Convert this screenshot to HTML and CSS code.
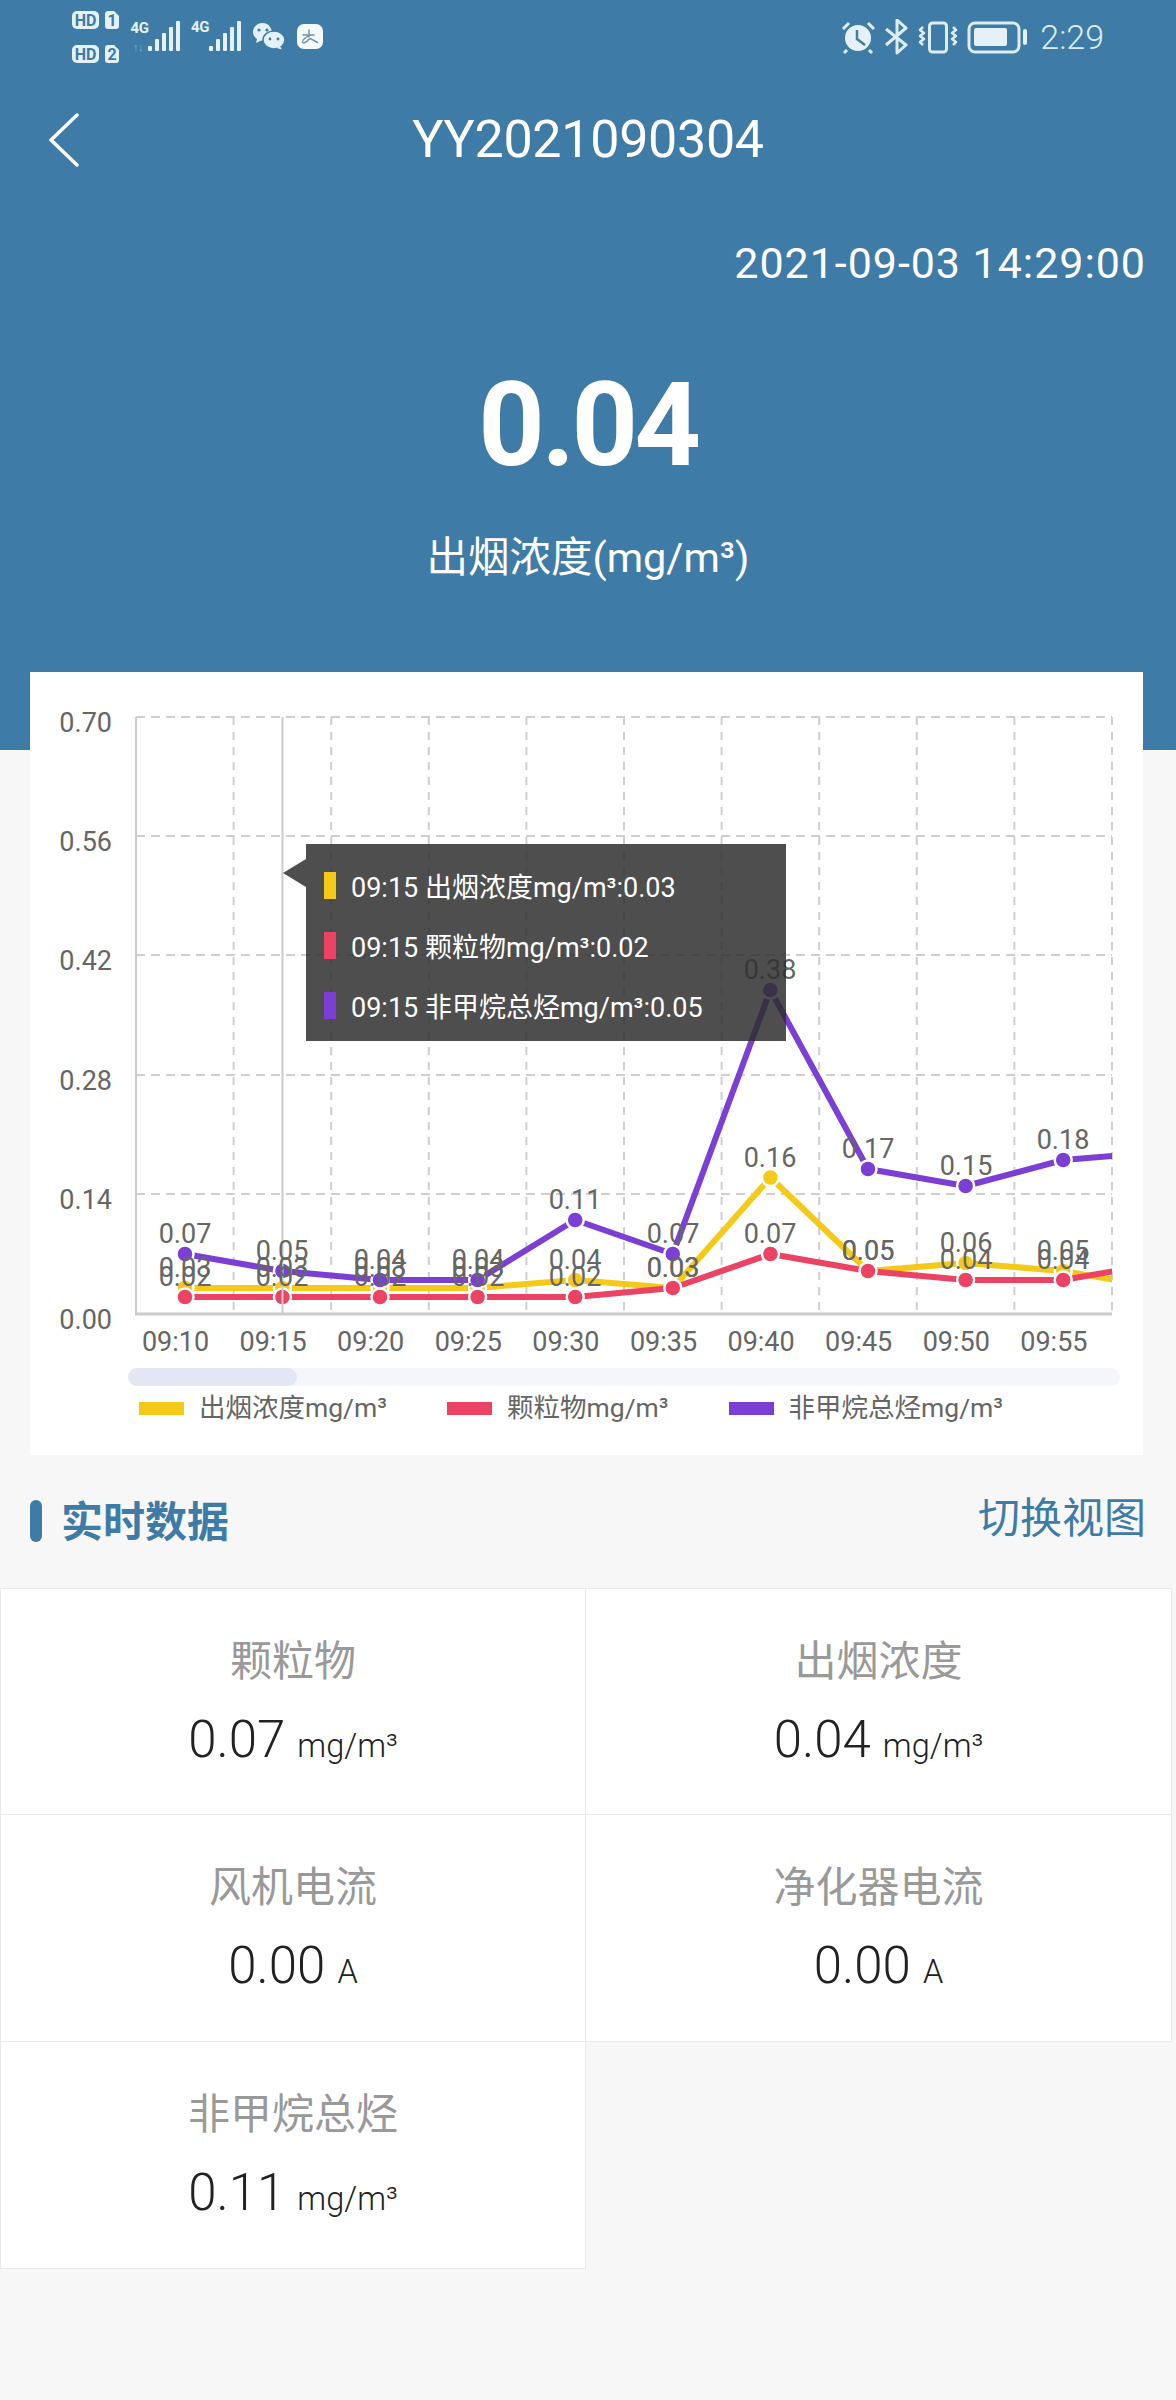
FILE: index.html
```html
<!DOCTYPE html>
<html lang="zh-CN">
<head>
<meta charset="utf-8">
<title>YY2021090304</title>
<link rel="stylesheet" href="styles.css">
</head>
<body>
<header class="hero">
  <div class="status">
    <svg class="status-left" width="260" height="58" viewBox="70 8 260 58">
      <rect class="sb-fill" x="72" y="11" width="27" height="18" rx="5"/>
      <text class="sb-hd" x="85.500" y="26">HD</text>
      <path class="sb-fill" d="M108 11h6l5 5v10a3 3 0 0 1-3 3h-8a3 3 0 0 1-3-3V14a3 3 0 0 1 3-3z"/>
      <text class="sb-hd" x="112" y="26">1</text>
      <rect class="sb-fill" x="72" y="45" width="27" height="18" rx="5"/>
      <text class="sb-hd" x="85.500" y="60">HD</text>
      <path class="sb-fill" d="M108 45h6l5 5v10a3 3 0 0 1-3 3h-8a3 3 0 0 1-3-3V48a3 3 0 0 1 3-3z"/>
      <text class="sb-hd" x="112" y="60">2</text>
      <text class="sb-4g" x="139.500" y="33">4G</text>
      <text class="sb-4g sb-4g-faint" x="138" y="51">↑↓</text>
      <g class="sb-bars">
        <rect x="148" y="46" width="4" height="5" rx="1"/>
        <rect x="155" y="39" width="4" height="12" rx="1"/>
        <rect x="162" y="33" width="4" height="18" rx="1"/>
        <rect x="169" y="27" width="4" height="24" rx="1"/>
        <rect x="176" y="21" width="4" height="30" rx="1"/>
      </g>
      <text class="sb-4g" x="200" y="32">4G</text>
      <g class="sb-bars">
        <rect x="209" y="46" width="4" height="5" rx="1"/>
        <rect x="216" y="39" width="4" height="12" rx="1"/>
        <rect x="223" y="33" width="4" height="18" rx="1"/>
        <rect x="230" y="27" width="4" height="24" rx="1"/>
        <rect x="237" y="21" width="4" height="30" rx="1"/>
      </g>
      <path class="sb-fill" d="M263 23c-6 0-10 4-10 9 0 3 1.500 5 4 7l-1 4 5-2.500c1 .3 2 .4 3 .4l8-9c-1-5-4-8.900-9-8.900z"/>
      <ellipse class="sb-wx" cx="274" cy="40" rx="11" ry="9"/>
      <path class="sb-fill" d="M280 46l2 3.500-5.500-1.500z"/>
      <circle class="sb-eye" cx="259" cy="30" r="1.600"/>
      <circle class="sb-eye" cx="267" cy="30" r="1.600"/>
      <circle class="sb-eye" cx="270" cy="39" r="1.400"/>
      <circle class="sb-eye" cx="278" cy="39" r="1.400"/>
      <rect class="sb-fill sb-app-bg" x="297" y="24" width="26" height="25" rx="7"/>
      <path class="sb-app" d="M303 35h11M309 30v7M308 36c-3 2-6 4-5.500 6 .5 1.500 4 .5 6-2.500l2-1 7 4"/>
    </svg>
    <div class="status-right">
      <svg width="192" height="36" viewBox="838 18 192 36">
        <circle class="sb-fill" cx="858" cy="37" r="13"/>
        <path class="sb-hand" d="M857 29v9l8 6"/>
        <path class="sb-line" d="M843 28l6-6M874 28l-6-6M847 49l-3 3M869 49l3 3"/>
        <path class="sb-line" d="M886 28l20 16-9 8V19l9 8-20 17"/>
        <rect class="sb-line" x="929.500" y="22" width="17" height="29" rx="3"/>
        <path class="sb-line sb-thin" d="M923 26l-3 3 4 3-4 3 4 3-4 3 3 3M953 26l3 3-4 3 4 3-4 3 4 3-3 3"/>
        <rect class="sb-line" x="969" y="22" width="50" height="29" rx="6"/>
        <rect class="sb-fill" x="974" y="27" width="33" height="18" rx="2"/>
        <rect class="sb-fill" x="1023" y="28" width="4" height="16" rx="2"/>
      </svg>
      <span class="status-time">2:29</span>
    </div>
  </div>
  <nav class="nav">
    <svg class="back" width="32" height="54" viewBox="0 0 32 54">
      <path d="M29 2L3 27l26 25"/>
    </svg>
    <h1 class="nav-title">YY2021090304</h1>
  </nav>
  <p class="stamp">2021-09-03 14:29:00</p>
  <p class="big">0.04</p>
  <p class="sub">出烟浓度(mg/m³)</p>
</header>

<section class="card">
  <svg class="chart" width="1113" height="688" viewBox="30 672 1113 688">
    <defs>
      <clipPath id="plot"><rect x="136" y="700" width="976" height="620"/></clipPath>
    </defs>
    <path class="grid-h" d="M136 717H1112M136 836H1112M136 955H1112M136 1075H1112M136 1194H1112"/>
    <path class="grid-v" d="M233.600 717V1314M331.200 717V1314M428.800 717V1314M526.400 717V1314M624 717V1314M721.600 717V1314M819.200 717V1314M916.800 717V1314M1014.400 717V1314M1112 717V1314"/>
    <path class="axis" d="M136 717V1314"/>
    <path class="axis axis-x" d="M135 1314H1112"/>
    <g class="tick tick-y">
      <text x="112" y="732">0.70</text>
      <text x="112" y="851">0.56</text>
      <text x="112" y="970">0.42</text>
      <text x="112" y="1090">0.28</text>
      <text x="112" y="1209">0.14</text>
      <text x="112" y="1329">0.00</text>
    </g>
    <g class="tick tick-x">
      <text x="175.500" y="1351">09:10</text>
      <text x="273.100" y="1351">09:15</text>
      <text x="370.700" y="1351">09:20</text>
      <text x="468.300" y="1351">09:25</text>
      <text x="565.900" y="1351">09:30</text>
      <text x="663.500" y="1351">09:35</text>
      <text x="761.100" y="1351">09:40</text>
      <text x="858.700" y="1351">09:45</text>
      <text x="956.300" y="1351">09:50</text>
      <text x="1053.900" y="1351">09:55</text>
    </g>
    <g clip-path="url(#plot)">
      <polyline class="line line-y" points="185,1288 282.400,1288 380,1288 477.600,1288 575.200,1280 672.800,1288 770.400,1177.500 868,1271 965.600,1263 1063.200,1271 1160.800,1288"/>
      <g class="dot dot-y">
        <circle cx="185" cy="1288" r="8.500"/><circle cx="282.400" cy="1288" r="8.500"/><circle cx="380" cy="1288" r="8.500"/><circle cx="477.600" cy="1288" r="8.500"/><circle cx="575.200" cy="1280" r="8.500"/><circle cx="672.800" cy="1288" r="8.500"/><circle cx="770.400" cy="1177.500" r="8.500"/><circle cx="868" cy="1271" r="8.500"/><circle cx="965.600" cy="1263" r="8.500"/><circle cx="1063.200" cy="1271" r="8.500"/>
      </g>
      <polyline class="line line-r" points="185,1297 282.400,1297 380,1297 477.600,1297 575.200,1297 672.800,1288 770.400,1254 868,1271 965.600,1280 1063.200,1280 1160.800,1263"/>
      <g class="dot dot-r">
        <circle cx="185" cy="1297" r="8.500"/><circle cx="282.400" cy="1297" r="8.500"/><circle cx="380" cy="1297" r="8.500"/><circle cx="477.600" cy="1297" r="8.500"/><circle cx="575.200" cy="1297" r="8.500"/><circle cx="672.800" cy="1288" r="8.500"/><circle cx="770.400" cy="1254" r="8.500"/><circle cx="868" cy="1271" r="8.500"/><circle cx="965.600" cy="1280" r="8.500"/><circle cx="1063.200" cy="1280" r="8.500"/>
      </g>
      <polyline class="line line-p" points="185,1254 282.400,1271 380,1280 477.600,1280 575.200,1220 672.800,1254 770.400,990 868,1169 965.600,1186 1063.200,1160 1160.800,1152"/>
      <g class="dot dot-p">
        <circle cx="185" cy="1254" r="8.500"/><circle cx="282.400" cy="1271" r="8.500"/><circle cx="380" cy="1280" r="8.500"/><circle cx="477.600" cy="1280" r="8.500"/><circle cx="575.200" cy="1220" r="8.500"/><circle cx="672.800" cy="1254" r="8.500"/><circle cx="770.400" cy="990" r="8.500"/><circle cx="868" cy="1169" r="8.500"/><circle cx="965.600" cy="1186" r="8.500"/><circle cx="1063.200" cy="1160" r="8.500"/>
      </g>
    </g>
    <path class="pointer" d="M282.500 717V1314"/>
    <g class="tick point-label">
      <text x="185" y="1277">0.03</text><text x="282" y="1277">0.03</text><text x="380" y="1277">0.03</text><text x="478" y="1277">0.03</text><text x="575" y="1269">0.04</text><text x="673" y="1277">0.03</text><text x="770" y="1167">0.16</text><text x="868" y="1260">0.05</text><text x="966" y="1252">0.06</text><text x="1063" y="1260">0.05</text>
      <text x="185" y="1286">0.02</text><text x="282" y="1286">0.02</text><text x="380" y="1286">0.02</text><text x="478" y="1286">0.02</text><text x="575" y="1286">0.02</text><text x="673" y="1277">0.03</text><text x="770" y="1243">0.07</text><text x="868" y="1260">0.05</text><text x="966" y="1269">0.04</text><text x="1063" y="1269">0.04</text>
      <text x="185" y="1243">0.07</text><text x="282" y="1260">0.05</text><text x="380" y="1269">0.04</text><text x="478" y="1269">0.04</text><text x="575" y="1209">0.11</text><text x="673" y="1243">0.07</text><text x="770" y="979">0.38</text><text x="868" y="1158">0.17</text><text x="966" y="1175">0.15</text><text x="1063" y="1149">0.18</text>
    </g>
  </svg>
  <div class="zoom-bar"><div class="zoom-thumb"></div></div>
  <div class="legend">
    <span class="legend-item"><i class="swatch swatch-y"></i>出烟浓度mg/m³</span>
    <span class="legend-item"><i class="swatch swatch-r"></i>颗粒物mg/m³</span>
    <span class="legend-item"><i class="swatch swatch-p"></i>非甲烷总烃mg/m³</span>
  </div>
  <div class="tooltip">
    <div class="tip-row"><i class="tip-mark swatch-y"></i>09:15 出烟浓度mg/m³:0.03</div>
    <div class="tip-row"><i class="tip-mark swatch-r"></i>09:15 颗粒物mg/m³:0.02</div>
    <div class="tip-row"><i class="tip-mark swatch-p"></i>09:15 非甲烷总烃mg/m³:0.05</div>
  </div>
</section>

<section class="section-head">
  <h2 class="section-title"><span class="section-text">实时数据</span></h2>
  <a class="section-link">切换视图</a>
</section>

<section class="metrics">
  <div class="metric">
    <div class="metric-name">颗粒物</div>
    <div class="metric-value">0.07<span class="metric-unit">mg/m³</span></div>
  </div>
  <div class="metric">
    <div class="metric-name">出烟浓度</div>
    <div class="metric-value">0.04<span class="metric-unit">mg/m³</span></div>
  </div>
  <div class="metric">
    <div class="metric-name">风机电流</div>
    <div class="metric-value">0.00<span class="metric-unit">A</span></div>
  </div>
  <div class="metric">
    <div class="metric-name">净化器电流</div>
    <div class="metric-value">0.00<span class="metric-unit">A</span></div>
  </div>
  <div class="metric">
    <div class="metric-name">非甲烷总烃</div>
    <div class="metric-value">0.11<span class="metric-unit">mg/m³</span></div>
  </div>
</section>
</body>
</html>
```
FILE: styles.css
```css
* { box-sizing: border-box; }
html, body { margin: 0; padding: 0; }
body {
  background: #f7f7f7;
  font-family: Roboto, "Noto Sans CJK SC", sans-serif;
  min-height: 2400px;
  color: #333;
}
p, h1, h2 { margin: 0; font-weight: 400; }

/* Header */
.hero {
  height: 750px;
  background: #3f7ba7;
  color: #fff;
  display: flex;
  flex-direction: column;
}
.status {
  height: 70px;
  padding: 8px 72px 0 70px;
  display: flex;
  justify-content: space-between;
  align-items: flex-start;
}
.status-left { display: block; }
.status-right { display: flex; align-items: center; gap: 10px; padding-top: 11px; }
.status-right svg { display: block; }
.status-time { font-size: 34px; font-weight: 300; line-height: 36px; color: #dcedf7; }
.sb-fill { fill: #e4f1f9; }
.sb-app-bg { fill: #f4f9fc; }
.sb-hd { font: 700 16px Roboto, sans-serif; fill: #3f7ba7; text-anchor: middle; }
.sb-4g { font: 700 15px Roboto, sans-serif; letter-spacing: -.5px; fill: #e4f1f9; text-anchor: middle; }
.sb-4g-faint { fill: #7fadcf; font-size: 11px; }
.sb-bars rect { fill: #e4f1f9; }
.sb-wx { fill: #e4f1f9; stroke: #3f7ba7; stroke-width: 1.5; }
.sb-eye { fill: #3f7ba7; }
.sb-app { fill: none; stroke: #6c94b2; stroke-width: 1.5; stroke-linecap: round; }
.sb-hand { fill: none; stroke: #3f7ba7; stroke-width: 2.5; }
.sb-line { fill: none; stroke: #dcedf7; stroke-width: 3; stroke-linejoin: round; }
.sb-thin { stroke-width: 2.5; }

.nav {
  height: 100px;
  margin-top: 20px;
  position: relative;
  display: flex;
  align-items: center;
  justify-content: center;
}
.back { position: absolute; left: 48px; top: 23px; }
.back path { fill: none; stroke: #fff; stroke-width: 3.5; stroke-linecap: round; stroke-linejoin: round; }
.nav-title { font-size: 52px; line-height: 60px; font-weight: 400; letter-spacing: -.3px; }
.stamp {
  margin-top: 48px;
  padding-right: 30px;
  text-align: right;
  font-size: 43px;
  line-height: 50px;
  letter-spacing: .95px;
}
.big {
  margin-top: 77px;
  text-align: center;
  font-size: 116px;
  line-height: 120px;
  font-weight: 700;
  letter-spacing: -3.5px;
}
.sub {
  margin-top: 48px;
  text-align: center;
  font-size: 41.500px;
  line-height: 50px;
}

/* Chart card */
.card {
  position: relative;
  width: 1113px;
  height: 783px;
  margin: -78px 0 0 30px;
  background: #fff;
}
.chart { display: block; }
.grid-h { fill: none; stroke: #cfcfcf; stroke-width: 2; stroke-dasharray: 9 6; }
.grid-v { fill: none; stroke: #cfcfcf; stroke-width: 2; stroke-dasharray: 8 7; }
.axis { fill: none; stroke: #ccc; stroke-width: 2; }
.axis-x { stroke-width: 3; }
.pointer { fill: none; stroke: #ccc; stroke-width: 2; }
.tick text { font-size: 27px; fill: #666; }
.tick-y text { text-anchor: end; }
.tick-x text, .point-label text { text-anchor: middle; }
.line { fill: none; stroke-width: 6; stroke-linejoin: round; }
.line-y { stroke: #f5c918; }
.line-r { stroke: #ec4263; }
.line-p { stroke: #7b3fd6; }
.dot circle { stroke: #fff; stroke-width: 2.500; }
.dot-y circle { fill: #f5c918; }
.dot-r circle { fill: #ec4263; }
.dot-p circle { fill: #7b3fd6; }

.zoom-bar {
  width: 992px;
  height: 18px;
  margin: 8px 0 0 98px;
  border-radius: 9px;
  background: #f5f6fc;
}
.zoom-thumb {
  width: 169px;
  height: 18px;
  border-radius: 9px;
  background: #e3e7f5;
}
.legend {
  margin-top: 6px;
  padding-left: 109px;
  display: flex;
  gap: 60px;
  font-size: 26.500px;
  line-height: 32px;
  color: #666;
}
.legend-item { display: flex; align-items: center; gap: 15px; }
.swatch { display: block; width: 45px; height: 13px; }
.swatch-y { background: #f5c918; }
.swatch-r { background: #ec4263; }
.swatch-p { background: #7b3fd6; }

.tooltip {
  position: absolute;
  left: 276px;
  top: 172px;
  width: 480px;
  height: 197px;
  padding: 28px 0 0 18px;
  display: flex;
  flex-direction: column;
  gap: 33px;
  background: rgba(47, 47, 47, .85);
  color: #fff;
  font-size: 27px;
}
.tooltip::before {
  content: "";
  position: absolute;
  left: -23px;
  top: 15px;
  border-style: solid;
  border-width: 14.500px 23px 14.500px 0;
  border-color: transparent rgba(47, 47, 47, .85) transparent transparent;
}
.tip-row { display: flex; align-items: center; height: 27px; gap: 15px; white-space: nowrap; }
.tip-mark { display: block; width: 12px; height: 27px; }

/* Section heading */
.section-head {
  height: 42px;
  margin: 45px 0 0 30px;
  padding-right: 30px;
  display: flex;
  justify-content: space-between;
  align-items: center;
  color: #3f7ba7;
}
.section-title {
  display: flex;
  align-items: center;
  gap: 19px;
  font-size: 42px;
  line-height: 42px;
  font-weight: 700;
}
.section-title::before {
  content: "";
  display: block;
  width: 12px;
  height: 42px;
  border-radius: 6px;
  background: #3f7ba7;
}
.section-text { padding-top: 3px; }
.section-link { font-size: 42px; line-height: 42px; padding-bottom: 4px; }

/* Metric tiles */
.metrics {
  width: 1172px;
  margin-top: 46px;
  display: grid;
  grid-template-columns: 586px 586px;
  grid-auto-rows: 227px;
}
.metric {
  background: #fff;
  border-right: 1px solid #e9e9e9;
  border-bottom: 1px solid #e9e9e9;
  padding-top: 48px;
  display: flex;
  flex-direction: column;
  align-items: center;
}
.metric:nth-child(-n+2) { border-top: 1px solid #e9e9e9; }
.metric:nth-child(odd) { border-left: 1px solid #e9e9e9; }
.metric-name { font-size: 42px; line-height: 50px; color: #999; }
.metric-value { margin-top: 23px; font-size: 51px; line-height: 60px; font-weight: 300; color: #222; }
.metric-unit { margin-left: 12px; font-size: 32.500px; font-weight: 300; color: #222; }
```
